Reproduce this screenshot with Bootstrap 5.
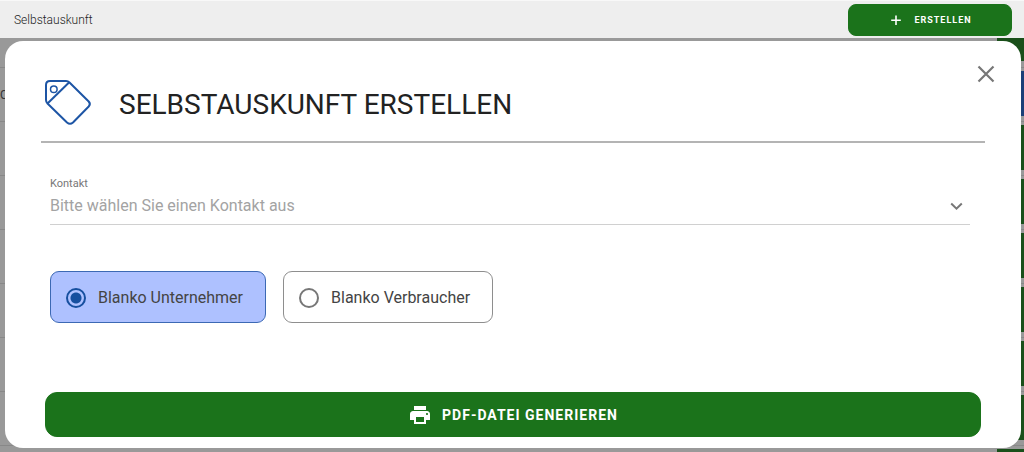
<!DOCTYPE html>
<html lang="de">
<head>
<meta charset="utf-8">
<meta name="viewport" content="width=device-width, initial-scale=1">
<title>Selbstauskunft</title>
<link href="https://cdn.jsdelivr.net/npm/bootstrap@5.3.0/dist/css/bootstrap.min.css" rel="stylesheet">
<style>
  body { font-family: Roboto, sans-serif; background: #fff; color: #222; }
  .topbar { height: 38px; background: #eee; border-top: 1px solid #f8f8f8; padding: 0 12px 0 14px; }
  .topbar-title { font-size: 12px; line-height: 16px; font-weight: 300; color: #222; }
  .btn-green { --bs-btn-color: #fff; --bs-btn-bg: #1b731b; --bs-btn-border-color: #1b731b; --bs-btn-hover-color: #fff; --bs-btn-hover-bg: #165f16; --bs-btn-hover-border-color: #165f16; font-weight: 700; text-transform: uppercase; letter-spacing: 1px; gap: 10px; }
  .btn-create { width: 164px; height: 32px; padding: 0; border-radius: 8px; font-size: 9px; line-height: 16px; }
  .btn-generate { height: 45px; padding: 0; border-radius: 12px; font-size: 14px; line-height: 20px; }
  .stage { height: calc(100vh - 38px); }
  .entry { height: 54px; flex: none; border-top: 1px solid #888; padding-top: 3px; }
  .entry-first { height: 29px; border-top: 0; padding-top: 0; }
  .entry-name { font-size: 12px; line-height: 48px; color: #333; }
  .entry-action { width: 27px; height: 45px; background: #1a4f1a; }
  .entry-first .entry-action { height: 23px; }
  .entry-action.entry-blue { background: #1b3f78; }
  .backdrop-grey { background: #999; }
  .sheet { top: 3px; left: 5px; right: 3px; background: #fff; border-radius: 18px; padding: 37px 36px 11px; }
  .sheet-head { height: 65px; border-bottom: 2px solid #b4b4b4; padding-left: 4px; gap: 24px; }
  .sheet-title { font-size: 28px; line-height: 36px; font-weight: 400; color: #222; padding-top: 9px; }
  .sheet-close { top: 24px; right: 26px; color: #777; line-height: 0; }
  .sheet-body { padding: 33px 15px 0 9px; }
  .contact-label { font-size: 11px; line-height: 16px; color: #777; }
  .contact-select { appearance: none; border: 0; border-bottom: 1px solid #d0d0d0; border-radius: 0; background: transparent; color: #a3a3a3; font-size: 16px; line-height: 24px; height: 33px; padding: 0 32px 4px 0; }
  .contact-arrow { right: 7px; bottom: 14px; }
  .choices { gap: 17px; margin-top: 46px; }
  .choice { height: 52px; padding: 2px 22px 0 15px; gap: 12px; border: 1px solid #8e8e8e; border-radius: 9px; font-size: 16px; line-height: 24px; color: #444; cursor: pointer; }
  .choice:has(input:checked) { background: #aec1ff; border-color: #3c69b4; }
  .choice input { appearance: none; width: 20px; height: 20px; margin: 0; border: 2px solid #777; border-radius: 50%; }
  .choice input:checked { border-color: #164f9f; background: radial-gradient(circle, #164f9f 5px, transparent 6px); }
  .sheet-foot { margin-top: 69px; padding: 0 4px; }
</style>
</head>
<body class="overflow-hidden">
<header class="topbar d-flex align-items-center justify-content-between">
  <span class="topbar-title">Selbstauskunft</span>
  <button type="button" class="btn btn-green btn-create d-flex align-items-center justify-content-center">
    <svg width="16" height="16" viewBox="0 0 16 16" fill="none" stroke="currentColor" stroke-width="1.6" aria-hidden="true"><path d="M8 3.500v9.500M3.200 8.200h9.600"/></svg>
    <span>Erstellen</span>
  </button>
</header>
<main class="stage position-relative overflow-hidden backdrop-grey">
  <div class="d-flex flex-column h-100" aria-hidden="true">
    <div class="entry entry-first d-flex justify-content-end"><div class="entry-action"></div></div>
    <div class="entry d-flex justify-content-between"><span class="entry-name">CI</span><div class="entry-action entry-blue"></div></div>
    <div class="entry d-flex justify-content-end"><div class="entry-action"></div></div>
    <div class="entry d-flex justify-content-end"><div class="entry-action"></div></div>
    <div class="entry d-flex justify-content-end"><div class="entry-action"></div></div>
    <div class="entry d-flex justify-content-end"><div class="entry-action"></div></div>
    <div class="entry d-flex justify-content-end"><div class="entry-action"></div></div>
    <div class="entry d-flex justify-content-end"><div class="entry-action"></div></div>
    <div class="entry d-flex justify-content-end"><div class="entry-action"></div></div>
  </div>
  <form class="sheet position-absolute" role="dialog" aria-labelledby="sheetTitle">
    <div class="sheet-head d-flex align-items-start">
      <svg width="50" height="50" viewBox="0 0 50 50" fill="none" stroke="#1d55a5" stroke-width="2" stroke-linejoin="round" aria-hidden="true">
        <path d="M5 3H21Q23 3 24.500 4.500L43.700 23.500Q46 26 43.700 28.500L28 44.500Q25 47 22 44.500L2.500 25.500Q1 24 1 22V7Q1 3 5 3Z"/>
        <path d="M24 4.500L2.500 25.500"/><circle cx="8.800" cy="11.300" r="3.300" stroke-width="1.500"/>
      </svg>
      <h1 class="sheet-title mb-0" id="sheetTitle">SELBSTAUSKUNFT ERSTELLEN</h1>
    </div>
    <button type="button" class="sheet-close btn p-0 border-0 position-absolute" aria-label="Schließen">
      <svg width="18" height="18" viewBox="0 0 18 18" fill="none" stroke="currentColor" stroke-width="2.200" aria-hidden="true"><path d="M1.500 1.500l15 15M16.500 1.500l-15 15"/></svg>
    </button>
    <div class="sheet-body">
      <div class="position-relative">
        <label class="contact-label d-block" for="contact">Kontakt</label>
        <select class="contact-select d-block w-100" id="contact">
          <option>Bitte wählen Sie einen Kontakt aus</option>
        </select>
        <svg class="contact-arrow position-absolute pe-none" width="13" height="9" viewBox="0 0 13 9" fill="none" stroke="#777" stroke-width="2" aria-hidden="true"><path d="M1.200 1.500l5.300 5.200 5.300-5.200"/></svg>
      </div>
      <div class="choices d-flex flex-wrap">
        <label class="choice d-flex align-items-center" for="business"><input type="radio" name="blank" id="business" checked>Blanko Unternehmer</label>
        <label class="choice d-flex align-items-center" for="consumer"><input type="radio" name="blank" id="consumer">Blanko Verbraucher</label>
      </div>
    </div>
    <div class="sheet-foot">
      <button type="button" class="btn btn-green btn-generate w-100 d-flex align-items-center justify-content-center">
        <svg width="24" height="24" viewBox="0 0 24 24" fill="currentColor" aria-hidden="true"><path d="M19 8H5c-1.660 0-3 1.340-3 3v6h4v4h12v-4h4v-6c0-1.660-1.340-3-3-3zm-3 11H8v-5h8v5zm3-7c-.550 0-1-.450-1-1s.450-1 1-1 1 .450 1 1-.450 1-1 1zm-1-9H6v4h12V3z"/></svg>
        <span>PDF-Datei generieren</span>
      </button>
    </div>
  </form>
</main>
<script src="https://cdn.jsdelivr.net/npm/bootstrap@5.3.0/dist/js/bootstrap.bundle.min.js"></script>
</body>
</html>
